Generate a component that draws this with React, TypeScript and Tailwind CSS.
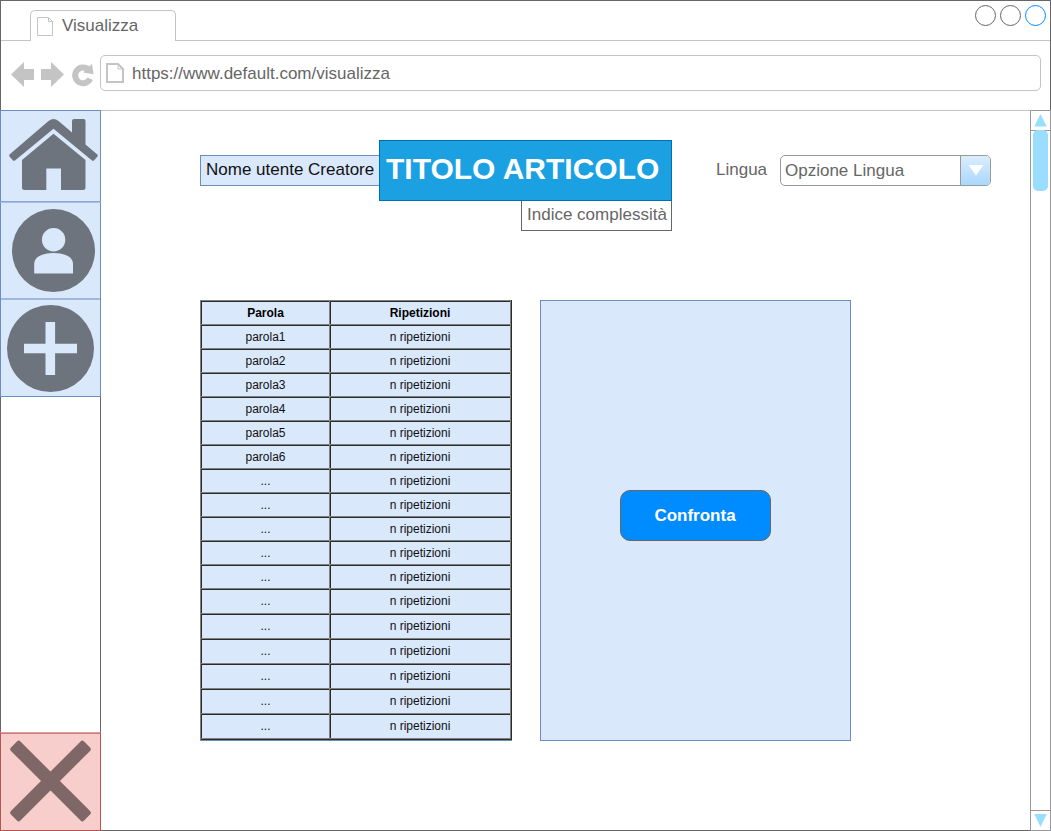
const words = ['parola1', 'parola2', 'parola3', 'parola4', 'parola5', 'parola6', ...Array<string>(11).fill('...')];

function TopBar() {
  return (
    <header className="flex h-[40px] shrink-0">
      <div className="w-[29px] border-b border-[#c4c4c4]" />
      <div className="mt-[9px] flex h-[31px] w-[146px] items-center rounded-t-[5px] border border-b-0 border-[#c4c4c4] pl-[6px]">
        <svg className="mt-px h-[20px] w-[17px] shrink-0" viewBox="0 0 17 20" fill="none" stroke="#c4c4c4">
          <path d="M0.5 0.5H11.5L15.5 4.5V18.5H0.5ZM11.5 0.5V4.5H15.5" />
        </svg>
        <span className="ml-[8px] text-[17px] leading-[20px]">Visualizza</span>
      </div>
      <div className="flex flex-1 justify-end border-b border-[#c4c4c4] pr-[3px] pt-[3px]">
        <svg className="h-[23px] w-[73px]" viewBox="0 0 73 23" fill="white">
          <circle cx="11.5" cy="11.5" r="10" stroke="#666" />
          <circle cx="36.5" cy="11.5" r="10" stroke="#666" />
          <circle cx="61.5" cy="11.5" r="10" stroke="#008cff" />
        </svg>
      </div>
    </header>
  );
}

function AddressBar() {
  return (
    <div className="flex h-[70px] shrink-0 items-start border-b border-[#c4c4c4] pr-[9px] pt-[14px]">
      <svg className="h-[36px] w-[99px] shrink-0" viewBox="1 55 99 36" fill="#c4c4c4">
        <path d="M11 74.5L24 62V69H34V80H24V87Z" />
        <path d="M64 74.5L51 62V69H41V80H51V87Z" />
        <path d="M90.2 78.8A7.9 7.9 0 1 1 88 69.2" fill="none" stroke="#c4c4c4" strokeWidth="6" />
        <path d="M92 63.8L93.6 74.2L83 72.4Z" />
      </svg>
      <div className="flex h-[36px] flex-1 items-center rounded-[5px] border border-[#c4c4c4] pl-[5px]">
        <svg className="h-[20px] w-[18px]" viewBox="0 0 18 20" fill="none" stroke="#c4c4c4">
          <path d="M1 1H12L17 6V19H1Z" strokeWidth="2" />
          <path d="M12 1V6H17" />
        </svg>
        <span className="ml-[8px] mt-[2px] text-[17px] leading-[20px]">https://www.default.com/visualizza</span>
      </div>
    </div>
  );
}

function Sidebar() {
  return (
    <nav className="-mb-px -ml-px -mt-px flex w-[101px] shrink-0 flex-col border-r border-[#666]">
      <a className="-mr-px h-[92px] border border-[#6c8ebf] border-b-[#88a6d4] bg-[#dae8fc]">
        <svg className="h-[90px] w-[99px]" viewBox="1 111 99 90" fill="#6d747d">
          <path d="M9.5 154.5Q8.8 155.5 9.5 156.5L13 160.4Q14 161.2 15 160.4L53.5 128.8L92 160.4Q93 161.2 94 160.4L97.5 156.5Q98.3 155.5 97.3 154.5L85.5 144.5V121Q85.5 119 83.5 119H74Q72 119 72 121V132.5L58.5 121Q53.5 117 48.5 121Z" />
          <path d="M53.5 133.7L85.5 160V187.5Q85.5 190 83 190H61V168.5H46.3V190H24.5Q22 190 22 187.5V160Z" />
        </svg>
      </a>
      <a className="-mr-px h-[96px] border border-b-0 border-[#6c8ebf] border-t-[#a9c0e4] bg-[#dae8fc]">
        <svg className="h-[95px] w-[99px]" viewBox="1 203 99 95">
          <circle cx="53.5" cy="250.6" r="41.5" fill="#6d747d" />
          <circle cx="53.6" cy="239.7" r="11.7" fill="#dae8fc" />
          <path d="M34.2 273.5V264C34.2 256.5 43 253 53.6 253S73 256.5 73 264V273.5Z" fill="#dae8fc" />
        </svg>
      </a>
      <a className="-mr-px h-[99px] border border-t-0 border-[#6c8ebf] bg-[#dae8fc]">
        <svg className="h-[98px] w-[99px]" viewBox="1 298 99 98">
          <path d="M1 299H100" stroke="#a0b8df" strokeWidth="2" />
          <circle cx="50.5" cy="348.5" r="43.5" fill="#6d747d" />
          <path d="M50.3 322V375M24 348.5H77" stroke="#dae8fc" strokeWidth="9.6" />
        </svg>
      </a>
      <a className="-mr-px mt-auto h-[99px] border border-[#b85450] border-t-[#dca09e] bg-[#f8cecc]">
        <svg className="h-[97px] w-[99px]" viewBox="1 733 99 97">
          <path d="M1 733.5H100" stroke="#cf7b78" />
          <g transform="translate(50.5 781)" fill="#7e6766">
            <rect x="-51.7" y="-6.7" width="103.4" height="13.4" rx="2.5" transform="rotate(45)" />
            <rect x="-51.7" y="-6.7" width="103.4" height="13.4" rx="2.5" transform="rotate(-45)" />
          </g>
        </svg>
      </a>
    </nav>
  );
}

function ArticleHeader() {
  return (
    <div className="flex items-start">
      <div className="mt-[15px] h-[31px] w-[179px] whitespace-nowrap border border-r-0 border-[#6c8ebf] bg-[#dae8fc] pl-[5px] text-[17px] leading-[28px] text-[#111]">
        Nome utente Creatore
      </div>
      <div className="flex w-[293px] flex-col items-end">
        <h1 className="h-[61px] w-full whitespace-nowrap border border-[#006eaf] bg-[#1ba1e2] pl-[6px] text-[30px] font-bold leading-[56px] text-white">
          TITOLO ARTICOLO
        </h1>
        <div className="h-[30px] w-[151px] whitespace-nowrap border border-t-0 border-[#666] bg-white pl-[5px] text-[17px] leading-[28px]">
          Indice complessità
        </div>
      </div>
      <div className="ml-[44px] mt-[15px] flex items-start text-[17px]">
        <span className="w-[64px] leading-[30px]">Lingua</span>
        <div className="flex h-[31px] w-[211px] overflow-hidden rounded-[5px] border border-[#999]">
          <span className="flex-1 pl-[4px] leading-[30px]">Opzione Lingua</span>
          <span className="flex w-[30px] items-start justify-center border-l border-[#999] bg-linear-to-b from-[#dcecfc] to-[#a8d8ff] pt-[9px]">
            <svg className="h-[11px] w-[16px]" viewBox="0 0 16 11" fill="white">
              <path d="M0.5 0H15.5L8 10.5Z" />
            </svg>
          </span>
        </div>
      </div>
    </div>
  );
}

function Row({ left, right, className }: { left: string; right: string; className: string }) {
  return (
    <div role="row" className={`flex border-t border-[#808080] text-center ${className}`}>
      <span role="cell" className="w-[129px] border-l border-t border-[#2b2b2b] pr-px leading-[23px]">{left}</span>
      <span role="cell" className="flex-1 border-l border-t border-[#2b2b2b] pr-[2px] leading-[23px]">{right}</span>
    </div>
  );
}

function WordTable() {
  return (
    <div className="h-[441px] w-[312px] border-b border-[#6c8ebf]">
      <div role="table" className="relative h-[440px] w-[312px] border-x border-l-[#808080] border-r-[#2b2b2b] bg-[#dae8fc] text-[12px] text-[#111]">
        <Row left="Parola" right="Ripetizioni" className="h-[24px] font-bold text-black" />
        {words.map((word, i) => (
          <Row key={i} left={word} right="n ripetizioni" className={i < 11 ? 'h-[24px]' : 'h-[25px]'} />
        ))}
        <div className="h-[2px] border-t border-[#808080] bg-[#2b2b2b]" />
        <div className="absolute inset-y-px left-[128px] w-px bg-[#808080]" />
        <div className="absolute inset-y-px right-0 w-px bg-[#808080]" />
      </div>
    </div>
  );
}

function Scrollbar() {
  return (
    <div className="-mb-px -mr-px -mt-px flex w-[21px] shrink-0 flex-col border border-[#999]">
      <div className="flex h-[20px] justify-center border-b border-[#999] pt-[3px]">
        <svg className="h-[13px] w-[13px]" viewBox="0 0 13 13" fill="#99ddff"><path d="M6.5 0L12.7 12.5H0.3Z" /></svg>
      </div>
      <div className="-mt-px ml-[2px] h-[61px] w-[15px] rounded-[5px] bg-[#99ddff]" />
      <div className="mt-auto flex h-[20px] justify-center border-t border-[#999] pt-[3px]">
        <svg className="h-[13px] w-[13px]" viewBox="0 0 13 13" fill="#99ddff"><path d="M0.3 0H12.7L6.5 13Z" /></svg>
      </div>
    </div>
  );
}

export default function App() {
  return (
    <div className="flex h-[831px] w-[1051px] flex-col border border-[#666] bg-white font-['Liberation_Sans',Arial,sans-serif] text-[#666]">
      <TopBar />
      <AddressBar />
      <div className="flex min-h-0 flex-1">
        <Sidebar />
        <main className="flex-1 pl-[99px] pt-[29px]">
          <ArticleHeader />
          <div className="mt-[69px] flex gap-[28px]">
            <WordTable />
            <section className="flex h-[441px] w-[311px] justify-center border border-[#6c8ebf] bg-[#dae8fc] pt-[189px]">
              <button className="h-[51px] w-[151px] rounded-[10px] border border-[#666] bg-[#008cff] pr-px text-[17px] font-bold text-white">
                Confronta
              </button>
            </section>
          </div>
        </main>
        <Scrollbar />
      </div>
    </div>
  );
}
